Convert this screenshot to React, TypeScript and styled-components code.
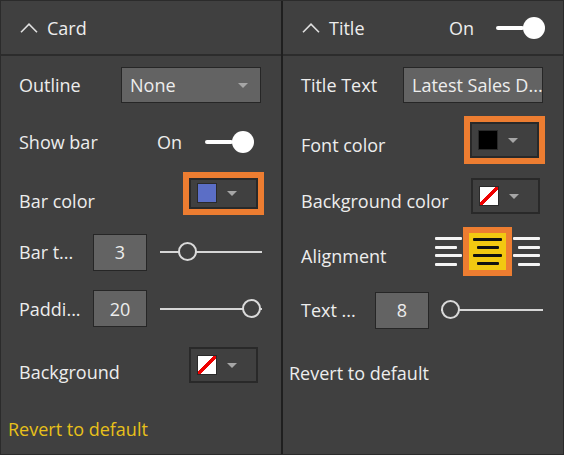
import styled, { createGlobalStyle } from "styled-components";

const GlobalStyle = createGlobalStyle`
  html, body {
    margin: 0;
    padding: 0;
    background: #404040;
  }
  body {
    font-family: "Open Sans", "Noto Sans", sans-serif;
  }
`;

const NO_FILL = "none";

const Frame = styled.div`
  width: 564px;
  height: 455px;
  box-sizing: border-box;
  border: 1px solid #2b2b2b;
  display: grid;
  grid-template-columns: 280px 2px 1fr;
  background: #404040;
  overflow: hidden;
  color: #ededed;
  font-size: 18px;
`;

const Divider = styled.div`
  background: #1f1f1f;
`;

const Panel = styled.div`
  display: flex;
  flex-direction: column;
  min-width: 0;
`;

const Header = styled.div`
  height: 53px;
  display: flex;
  align-items: center;
  padding-left: 19px;
  border-bottom: 2px solid #2c2c2c;
`;

const HeaderTitle = styled.span<{ $w?: number }>`
  margin-left: 9px;
  width: ${(p) => (p.$w ? `${p.$w}px` : "auto")};
`;

const Row = styled.div<{ $h: number; $pl?: number }>`
  height: ${(p) => p.$h}px;
  display: flex;
  align-items: center;
  padding-left: ${(p) => p.$pl ?? 18}px;
  flex-shrink: 0;
`;

const Label = styled.span<{ $w: number; $drop?: number }>`
  width: ${(p) => p.$w}px;
  flex-shrink: 0;
  white-space: nowrap;
  padding-top: ${(p) => (p.$drop ?? 0) * 2}px;
`;

const StateText = styled.span<{ $w: number }>`
  width: ${(p) => p.$w}px;
  flex-shrink: 0;
`;

const Select = styled.div<{ $w: number }>`
  width: ${(p) => p.$w}px;
  height: 36px;
  box-sizing: border-box;
  border: 1px solid #262626;
  background: #636363;
  display: flex;
  align-items: center;
  padding: 0 12px 0 8px;
  justify-content: space-between;
  white-space: nowrap;
  overflow: hidden;
`;

const Caret = styled.span`
  width: 0;
  height: 0;
  border-left: 5px solid transparent;
  border-right: 5px solid transparent;
  border-top: 5px solid #a6a6a6;
  flex-shrink: 0;
`;

const Highlight = styled.div<{ $h: number; $pad: number }>`
  height: ${(p) => p.$h}px;
  box-sizing: border-box;
  padding: ${(p) => p.$pad}px 6px;
  background: #ed7d31;
  display: flex;
  align-items: center;
`;

const ColorBox = styled.div<{ $h?: number }>`
  width: 69px;
  height: ${(p) => p.$h ?? 36}px;
  box-sizing: border-box;
  border: 2px solid #292929;
  background: #404040;
  display: flex;
  align-items: center;
  padding-left: 6px;
  gap: 10px;
`;

const Swatch = styled.div<{ $color: string }>`
  width: 20px;
  height: 20px;
  box-sizing: border-box;
  border: 1px solid #2a2a2a;
  background: ${(p) =>
    p.$color === NO_FILL
      ? "linear-gradient(to bottom right, #fff 0 42%, #e00 42% 58%, #fff 58% 100%)"
      : p.$color};
`;

const NumberBox = styled.div`
  width: 54px;
  height: 37px;
  box-sizing: border-box;
  border: 1px solid #262626;
  background: #636363;
  display: flex;
  align-items: center;
  justify-content: center;
`;

const Slider = styled.div<{ $ml: number }>`
  width: 102px;
  height: 20px;
  margin-left: ${(p) => p.$ml}px;
  position: relative;
  display: flex;
  align-items: center;
  &::before {
    content: "";
    width: 100%;
    height: 2px;
    background: #d6d6d6;
  }
`;

const Knob = styled.div`
  position: absolute;
  top: 0;
  width: 19px;
  height: 19px;
  box-sizing: border-box;
  border: 2px solid #dadada;
  border-radius: 50%;
  background: #404040;
`;

const Toggle = styled.div`
  display: flex;
  align-items: center;
`;

const ToggleTrack = styled.div`
  width: 28px;
  height: 4px;
  background: #fff;
  border-radius: 2px;
`;

const ToggleThumb = styled.div`
  width: 22px;
  height: 22px;
  border-radius: 50%;
  background: #fff;
  margin-left: -1px;
`;

const AlignGroup = styled.div`
  display: flex;
  align-items: center;
`;

const AlignIcon = styled.div<{ $side: "left" | "right" }>`
  width: 27px;
  height: 29px;
  display: flex;
  flex-direction: column;
  justify-content: space-between;
  align-items: ${(p) => (p.$side === "left" ? "flex-start" : "flex-end")};
`;

const AlignLine = styled.span<{ $w: number; $dark?: boolean }>`
  width: ${(p) => p.$w}px;
  height: 3px;
  border-radius: 1px;
  background: ${(p) => (p.$dark ? "#111" : "#f4f4f4")};
`;

const CenterAlign = styled.div`
  width: 49px;
  height: 49px;
  box-sizing: border-box;
  border: 6px solid #ed7d31;
  background: #f2c811;
  display: flex;
  flex-direction: column;
  justify-content: space-between;
  align-items: center;
  padding: 5px 0;
  margin: 0 1px;
`;

const Revert = styled.span<{ $accent?: boolean }>`
  color: ${(p) => (p.$accent ? "#e8c01a" : "#ededed")};
`;

const Chevron = () => (
  <svg width="18" height="10" viewBox="0 0 18 10">
    <polyline
      points="1,9.2 9,1.2 17,9.2"
      fill="none"
      stroke="#e0e0e0"
      strokeWidth="1.6"
    />
  </svg>
);

const ToggleSwitch = () => (
  <Toggle>
    <ToggleTrack />
    <ToggleThumb />
  </Toggle>
);

const ColorPicker = ({ color, h }: { color: string; h?: number }) => (
  <ColorBox $h={h}>
    <Swatch $color={color} />
    <Caret />
  </ColorBox>
);

const Range = ({ pos, ml }: { pos: number; ml: number }) => (
  <Slider $ml={ml}>
    <Knob style={{ left: `${pos}px` }} />
  </Slider>
);

const TextLines = ({ side }: { side: "left" | "right" }) => (
  <AlignIcon $side={side}>
    <AlignLine $w={27} />
    <AlignLine $w={22} />
    <AlignLine $w={27} />
    <AlignLine $w={22} />
  </AlignIcon>
);

export default function App() {
  return (
    <>
      <GlobalStyle />
      <Frame>
        <Panel>
          <Header>
            <Chevron />
            <HeaderTitle>Card</HeaderTitle>
          </Header>
          <Row $h={58}>
            <Label $w={102}>Outline</Label>
            <Select $w={140}>
              None
              <Caret />
            </Select>
          </Row>
          <Row $h={56}>
            <Label $w={138}>Show bar</Label>
            <StateText $w={48}>On</StateText>
            <ToggleSwitch />
          </Row>
          <Row $h={46}>
            <Label $w={164} $drop={8}>
              Bar color
            </Label>
            <Highlight $h={43} $pad={6}>
              <ColorPicker color="#5b6ec6" h={31} />
            </Highlight>
          </Row>
          <Row $h={72}>
            <Label $w={74}>Bar t...</Label>
            <NumberBox>3</NumberBox>
            <Range pos={18} ml={13} />
          </Row>
          <Row $h={41}>
            <Label $w={74}>Paddi...</Label>
            <NumberBox>20</NumberBox>
            <Range pos={82} ml={13} />
          </Row>
          <Row $h={72}>
            <Label $w={170} $drop={7}>
              Background
            </Label>
            <ColorPicker color={NO_FILL} />
          </Row>
          <Row $h={56} $pl={7}>
            <Revert $accent>Revert to default</Revert>
          </Row>
        </Panel>
        <Divider />
        <Panel>
          <Header>
            <Chevron />
            <HeaderTitle $w={120}>Title</HeaderTitle>
            <StateText $w={47}>On</StateText>
            <ToggleSwitch />
          </Header>
          <Row $h={58}>
            <Label $w={102}>Title Text</Label>
            <Select $w={140}>Latest Sales D...</Select>
          </Row>
          <Row $h={52}>
            <Label $w={163} $drop={5}>
              Font color
            </Label>
            <Highlight $h={48} $pad={6}>
              <ColorPicker color="#000" />
            </Highlight>
          </Row>
          <Row $h={60}>
            <Label $w={170} $drop={5}>
              Background color
            </Label>
            <ColorPicker color={NO_FILL} />
          </Row>
          <Row $h={51}>
            <Label $w={134} $drop={4}>
              Alignment
            </Label>
            <AlignGroup>
              <TextLines side="left" />
              <CenterAlign>
                <AlignLine $w={29} $dark />
                <AlignLine $w={22} $dark />
                <AlignLine $w={29} $dark />
                <AlignLine $w={22} $dark />
              </CenterAlign>
              <TextLines side="right" />
            </AlignGroup>
          </Row>
          <Row $h={66}>
            <Label $w={74}>Text ...</Label>
            <NumberBox>8</NumberBox>
            <Range pos={0} ml={12} />
          </Row>
          <Row $h={60} $pl={6}>
            <Revert>Revert to default</Revert>
          </Row>
        </Panel>
      </Frame>
    </>
  );
}
